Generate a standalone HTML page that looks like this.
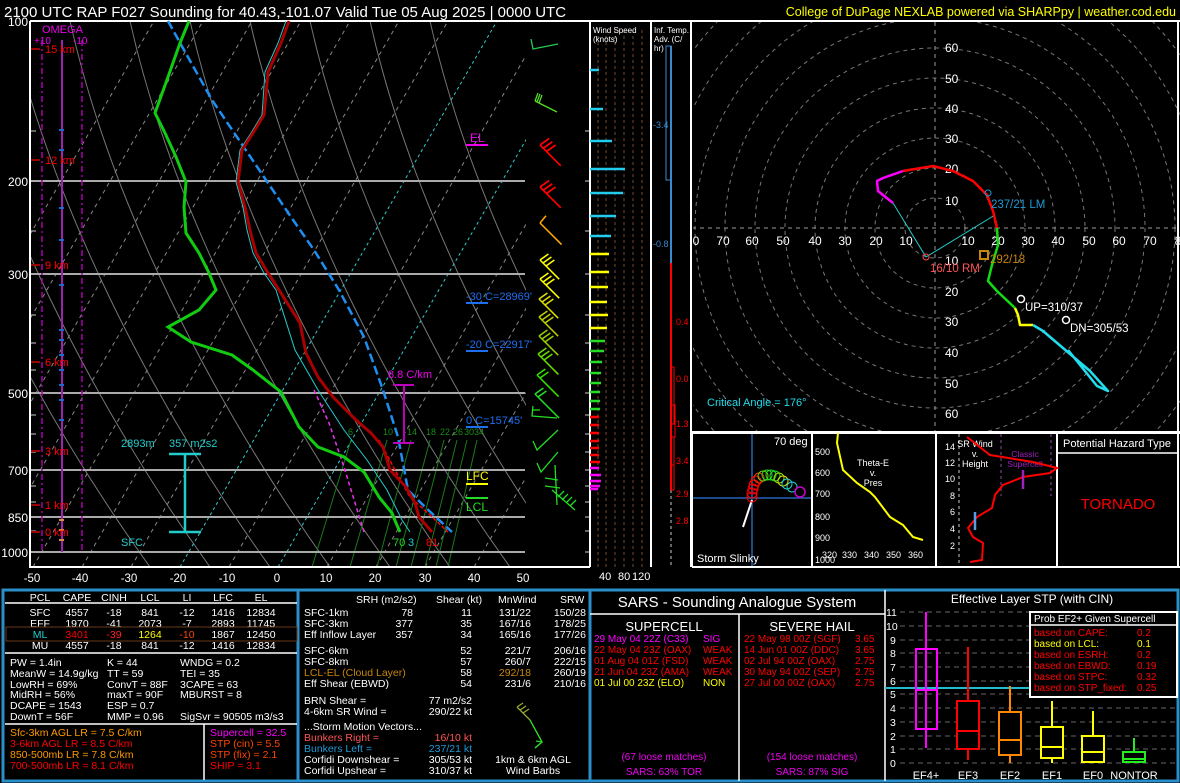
<!DOCTYPE html>
<html><head><meta charset="utf-8"><style>
html,body{margin:0;padding:0;background:#000;}
svg{display:block;font-family:"Liberation Sans",sans-serif;}
</style></head><body>
<svg width="1180" height="783" viewBox="0 0 1180 783" xmlns="http://www.w3.org/2000/svg">
<rect width="1180" height="783" fill="#000"/>
<text x="4" y="17" fill="#fff" font-size="15">2100 UTC RAP F027 Sounding for 40.43,-101.07 Valid  Tue 05 Aug 2025 | 0000 UTC</text>
<text x="1176" y="16" fill="#ff0" font-size="12.5" text-anchor="end">College of DuPage NEXLAB powered via SHARPpy | weather.cod.edu</text>

<defs><clipPath id="sk"><rect x="30" y="21" width="496" height="546"/></clipPath></defs>
<g clip-path="url(#sk)" fill="none">
 <g stroke="#777" stroke-width="1">
  <path d="M150 567 C30 400 -70 200 -110 21M210 567 C90 400 -10 200 -50 21M270 567 C150 400 50 200 10 21M330 567 C210 400 110 200 70 21M390 567 C270 400 170 200 130 21M450 567 C330 400 230 200 190 21M510 567 C390 400 290 200 250 21M570 567 C450 400 350 200 310 21M630 567 C510 400 410 200 370 21M690 567 C570 400 470 200 430 21"/>
 </g>
 <g stroke="#888" stroke-width="1" stroke-dasharray="4,4">
  <path d="M-163 567L154 21M-114 567L203 21M-65 567L252 21M-16 567L301 21M33 567L350 21M82 567L399 21M131 567L448 21M229 567L546 21M327 567L644 21M376 567L693 21M425 567L742 21M474 567L791 21"/>
 </g>
 <g stroke="#3cc" stroke-width="1" stroke-dasharray="3,3">
  <path d="M180 567L497 21M278 567L595 21"/>
 </g>
 <g stroke="#1a7a1a" stroke-width="1">
  <path d="M312 567L351 440M350 567L387 440M377 567L411 440M396 567L430 440M411 567L444 440M425 567L457 440M436 567L467 440M448 567L477 440"/>
 </g>
</g>
<g fill="#1a8a1a" font-size="9">
<text x="348" y="435">6</text><text x="383" y="435">10</text><text x="407" y="435">14</text><text x="426" y="435">18</text><text x="440" y="435">22</text><text x="453" y="435">26</text><text x="464" y="435">30</text><text x="474" y="435">34</text>
</g>
<g stroke="#aaa" stroke-width="2">
<path d="M30 181H525M30 274H525M30 393H525M30 470H525M30 517H525M30 552H525"/>
</g>
<g stroke="#888" stroke-width="1.5">
<path d="M30 131h6M30 231h6M30 315h6M30 343h6M30 370h6M30 415h6M30 434h6M30 452h6M30 486h6M30 502h6M30 531h6"/>
<path d="M585 131h6M585 181h6M585 231h6M585 274h6M585 315h6M585 343h6M585 370h6M585 393h6M585 415h6M585 434h6M585 452h6M585 470h6M585 486h6M585 502h6M585 517h6M585 531h6M585 552h6"/>
</g>
<path d="M30 21H1180M30 21V567H590M590 21V567" stroke="#fff" stroke-width="2" fill="none"/>
<g stroke="#a0a" stroke-width="1.5" fill="none">
<path d="M62 40V552" stroke="#a020b0" stroke-width="2"/>
<path d="M42 40V552M82 40V552" stroke-dasharray="6,3,2,3"/>
</g>
<g stroke="#1a6ad0" stroke-width="2"><path d="M59 130h5M59 150h5M59 208h5M59 240h5M59 285h5M59 330h5M59 340h5M59 355h5M59 370h5M59 385h5M59 400h5M59 420h5"/></g>
<g stroke="#d84" stroke-width="2"><path d="M59 520h5M59 530h5M59 540h5"/></g>
<text x="42" y="33" fill="#e0e" font-size="11">OMEGA</text>
<text x="34" y="44" fill="#e0e" font-size="10">+10</text>
<text x="73" y="44" fill="#e0e" font-size="10">-10</text>
<g stroke="#900" stroke-width="2"><path d="M31 49h9M31 160h9M31 265h9M31 362h9M31 451h9M31 505h9M31 532h9"/></g>
<g fill="#f00" font-size="11">
<text x="45" y="53">15 km</text><text x="45" y="164">12 km</text><text x="45" y="269">9 km</text><text x="45" y="366">6 km</text><text x="45" y="455">3 km</text><text x="45" y="509">1 km</text><text x="45" y="536">0 km</text>
</g>
<g fill="#fff" font-size="12" text-anchor="end">
<text x="28" y="26">100</text><text x="28" y="186">200</text><text x="28" y="279">300</text><text x="28" y="398">500</text><text x="28" y="475">700</text><text x="28" y="522">850</text><text x="28" y="557">1000</text>
</g>
<g fill="#fff" font-size="11.5" text-anchor="middle">
<text x="32" y="582">-50</text><text x="80" y="582">-40</text><text x="129" y="582">-30</text><text x="178" y="582">-20</text><text x="227" y="582">-10</text><text x="277" y="582">0</text><text x="326" y="582">10</text><text x="375" y="582">20</text><text x="425" y="582">30</text><text x="474" y="582">40</text><text x="523" y="582">50</text>
</g>
<polyline fill="none" stroke="#e3e" stroke-width="1.5" stroke-dasharray="4,3" points="314,390 329,423 344,467 364,532"/>
<polyline fill="none" stroke="#1e8ef0" stroke-width="2.5" stroke-dasharray="9,4" points="168,21 184,50 212,100 239,140 266,180 291,217 314,250 339,290 364,337 383,390 398,437 408,490 425,507 452,532"/>
<polyline fill="none" stroke="#f00" stroke-width="1.5" stroke-dasharray="4,2" points="379,440 395,470 410,497 430,515 448,532"/>
<polyline fill="none" stroke="#2cc" stroke-width="1" points="286,21 278,43 265,72 262,115 251,133 240,150 236,182 243,207 247,230 253,253 264,273 276,290 295,350 318,390 344,430 367,460 387,490 402,520 410,532"/>
<polyline fill="none" stroke="#a00" stroke-width="3" points="289,21 281,43 268,72 264,115 253,133 242,150 238,182 245,207 250,230 256,253 268,273 279,290 300,323 306,353 318,377 333,397 356,420 371,433 383,447 390,470 406,487 415,503 419,517 432,532"/>
<polyline fill="none" stroke="#1c1" stroke-width="3" points="189,21 180,43 168,77 155,113 165,133 176,157 186,182 184,207 186,233 199,253 209,273 216,290 199,310 168,327 191,342 232,355 253,370 281,392 299,427 318,447 344,457 364,472 379,497 392,513 396,523 400,532"/>
<text x="470" y="142" fill="#e0e" font-size="12">EL</text><path d="M466 145h22" stroke="#e0e" stroke-width="2"/>
<text x="466" y="480" fill="#ff0" font-size="12">LFC</text><path d="M466 484h22" stroke="#ff0" stroke-width="2"/>
<path d="M466 498h22" stroke="#2d2" stroke-width="2"/><text x="466" y="511" fill="#2d2" font-size="12">LCL</text>
<g fill="#1e6ef0" font-size="11">
<text x="466" y="300">-30 C=28969'</text><path d="M466 303h22" stroke="#1e6ef0" stroke-width="2"/>
<text x="466" y="348">-20 C=22917'</text><path d="M466 351h22" stroke="#1e6ef0" stroke-width="2"/>
<text x="466" y="424">0 C=15745'</text><path d="M466 427h22" stroke="#1e6ef0" stroke-width="2"/>
</g>
<text x="388" y="378" fill="#e0e" font-size="11">8.8 C/km</text>
<path d="M393 385h21M404 385V443M393 443h21" stroke="#b0b" stroke-width="2" fill="none"/>
<path d="M169 454h32M185 454V532M169 532h32" stroke="#2cc" stroke-width="2.5" fill="none"/>
<g fill="#2cc" font-size="11"><text x="121" y="447">2893m</text><text x="169" y="447">357 m2s2</text><text x="121" y="546">SFC</text></g>
<text x="393" y="546" fill="#2d2" font-size="11">70</text><text x="408" y="546" fill="#2cc" font-size="11">3</text><text x="426" y="546" fill="#f00" font-size="11">81</text>
<g fill="none" stroke-width="1.3">
<path d="M531 39 L533 49 L558 44" stroke="#2c5"/>
<path d="M535 101 L557 112 M535 101 l3 -8 M537 102 l3 -8 M539 103 l3 -8" stroke="#5d2"/>
<g stroke="#f00"><path transform="translate(540,145) scale(1.3)" d="M0 0 L16 16 M0 0 l7 -5 M2.5 2.5 l7 -5 M5 5 l7 -5"/><path transform="translate(540,187) scale(1.3)" d="M0 0 L16 16 M0 0 l7 -5 M2.5 2.5 l7 -5 M5 5 l7 -5"/></g>
<path transform="translate(540,223) scale(1.2)" d="M0 0 L18 18 M0 0 l5 -6" stroke="#fa0"/>
<path transform="translate(540,260) scale(1.2)" d="M0 0 L16 16 M0 0 l7 -5 M2.5 2.5 l7 -5 M5 5 l7 -5" stroke="#ff0"/>
<path transform="translate(540,279) scale(1.2)" d="M0 0 L16 16 M0 0 l7 -5 M2.5 2.5 l7 -5 M5 5 l7 -5" stroke="#ff0"/>
<path transform="translate(539,299) scale(1.2)" d="M0 0 L16 16 M0 0 l7 -5 M2.5 2.5 l7 -5 M5 5 l7 -5" stroke="#dd0"/>
<path transform="translate(539,317) scale(1.2)" d="M0 0 L16 16 M0 0 l7 -5 M2.5 2.5 l7 -5 M5 5 l7 -5" stroke="#bc0"/>
<path transform="translate(539,336) scale(1.2)" d="M0 0 L16 16 M0 0 l7 -5 M2.5 2.5 l7 -5 M5 5 l7 -5" stroke="#9c0"/>
<path transform="translate(538,354) scale(1.2)" d="M0 0 L17 17 M0 0 l7 -5 M2.5 2.5 l7 -5 M5 5 l7 -5" stroke="#6d0"/>
<path transform="translate(537,375) scale(1.2)" d="M0 0 L18 18 M0 0 l7 -5 M2.5 2.5 l7 -5" stroke="#3d0"/>
<path transform="translate(535,394) scale(1.2)" d="M0 0 L20 20 M0 0 l7 -5 M2.5 2.5 l7 -5" stroke="#2d2"/>
<path d="M533 406 L532 416 L557 418 M532 410 l8 0" stroke="#2d2"/>
<path d="M558 430 L537 450 L533 441" stroke="#2d2"/>
<path d="M558 452 L541 472 L537 463" stroke="#2d2"/>
<path d="M555 465 L557 505 M545 478 L558 480 M545 486 L560 488 M552 490 L575 510 M558 497 l6 -6 M562 500 l6 -6 M566 503 l6 -6 M570 506 l6 -6" stroke="#2d2"/>
</g>

<g stroke="#7a4a2a" stroke-width="1" stroke-dasharray="3,3"><path d="M598 30V567M606 30V567M615 30V567M624 30V567M633 30V567M642 30V567"/></g>
<path d="M651 21V567" stroke="#fff" stroke-width="2"/>
<path d="M590 21V567" stroke="#fff" stroke-width="1" stroke-dasharray="2,2"/>
<text x="593" y="33" fill="#fff" font-size="8">Wind Speed</text><text x="593" y="42" fill="#fff" font-size="8">(knots)</text>
<g stroke-width="2.5">
<g stroke="#2ce"><path d="M590 70H599M590 109H603M590 141H612M590 169H625M590 193H623M590 216H616M590 236H611"/></g>
<g stroke="#ff0"><path d="M590 254H609M590 272H609M590 287H608M590 302H607M590 315H608M590 328H607"/></g>
<g stroke="#2d2"><path d="M590 341H605M590 351H604M590 362H602M590 373H601M590 383H601M590 392H600M590 401H600M590 409H600"/></g>
<g stroke="#f00"><path d="M590 417H599M590 425H599M590 433H599M590 441H599M590 448H599M590 455H599M590 462H600"/></g>
<g stroke="#f0f"><path d="M590 468H599M590 475H601M590 481H601M590 486H600M590 489H598"/></g>
</g>
<g fill="#fff" font-size="11"><text x="599" y="580">40</text><text x="618" y="580">80</text><text x="632" y="580">120</text></g>
<text x="654" y="33" fill="#fff" font-size="8">Inf. Temp.</text><text x="654" y="42" fill="#fff" font-size="8">Adv. (C/</text><text x="654" y="51" fill="#fff" font-size="8">hr)</text>
<path d="M671 46V567" stroke="#888" stroke-width="1.5" stroke-dasharray="3,3"/>
<path d="M666 46h5V180h-5z" fill="none" stroke="#3a8ad0" stroke-width="1"/>
<path d="M671 46V263" stroke="#3a8ad0" stroke-width="2"/>
<path d="M671 263V490" stroke="#f00" stroke-width="2"/>
<path d="M671 367h3V424h-3M671 405h4V437h-4M671 437h3V465h-3M671 465h3V490h-3" fill="none" stroke="#f00" stroke-width="1"/>
<g font-size="9"><text x="653" y="128" fill="#3a8ad0">-3.4</text><text x="653" y="247" fill="#3a8ad0">-0.8</text>
<text x="676" y="325" fill="#f00">0.4</text><text x="676" y="382" fill="#f00">0.0</text><text x="676" y="427" fill="#f00">1.3</text><text x="676" y="464" fill="#f00">3.4</text><text x="676" y="497" fill="#f00">2.9</text><text x="676" y="524" fill="#f00">2.8</text></g>
<path d="M691 21V567" stroke="#fff" stroke-width="2"/>

<defs><clipPath id="hd"><rect x="693" y="22" width="487" height="409"/></clipPath></defs>
<g clip-path="url(#hd)" fill="none" stroke="#777" stroke-width="1" stroke-dasharray="4,4">
<circle cx="935" cy="228" r="30"/><circle cx="935" cy="228" r="60"/><circle cx="935" cy="228" r="90"/><circle cx="935" cy="228" r="120"/><circle cx="935" cy="228" r="150"/><circle cx="935" cy="228" r="180"/><circle cx="935" cy="228" r="210"/><circle cx="935" cy="228" r="240"/><circle cx="935" cy="228" r="270"/><circle cx="935" cy="228" r="300"/>
<path d="M935 22V432M692 228H1180" stroke="#999"/>
</g>
<g fill="#fff" font-size="12">
<text x="945" y="52">60</text><text x="945" y="83">50</text><text x="945" y="113">40</text><text x="945" y="143">30</text><text x="945" y="173">20</text><text x="945" y="205">10</text>
<text x="945" y="265">10</text><text x="945" y="296">20</text><text x="945" y="326">30</text><text x="945" y="357">40</text><text x="945" y="388">50</text><text x="945" y="418">60</text>
<g text-anchor="middle"><text x="696" y="245">0</text><text x="723" y="245">70</text><text x="752" y="245">60</text><text x="783" y="245">50</text><text x="815" y="245">40</text><text x="845" y="245">30</text><text x="876" y="245">20</text><text x="906" y="245">10</text><text x="968" y="245">10</text><text x="998" y="245">20</text><text x="1028" y="245">30</text><text x="1058" y="245">40</text><text x="1089" y="245">50</text><text x="1119" y="245">60</text><text x="1150" y="245">70</text><text x="1178" y="245">8</text></g>
</g>
<path d="M926 257L893 203M926 257L995 215" stroke="#2cc" stroke-width="1" fill="none"/>
<g fill="none" stroke-width="2.5" stroke-linejoin="round">
<polyline stroke="#f0f" points="893,203 878,191 877,181 883,178 903,171"/>
<polyline stroke="#f00" points="903,171 933,166 953,171 973,181 987,195 993,211 997,228"/>
<polyline stroke="#1d1" points="997,228 998,245 992,265 988,281 997,291 1015,308"/>
<polyline stroke="#ff0" points="1015,308 1018,315 1020,325 1033,325"/>
<polyline stroke="#2de" points="1033,325 1043,331 1090,371 1108,391 1097,386 1068,350"/>
</g>
<circle cx="926" cy="257" r="3" fill="none" stroke="#f44"/>
<text x="930" y="272" fill="#f55" font-size="11.5">16/10 RM</text>
<circle cx="988" cy="193" r="3" fill="none" stroke="#1e9ad6"/>
<text x="991" y="208" fill="#1e9ad6" font-size="11.5">237/21 LM</text>
<rect x="980" y="251" width="8" height="8" fill="none" stroke="#c8860a" stroke-width="2"/>
<text x="990" y="263" fill="#c8860a" font-size="11.5">292/18</text>
<circle cx="1021" cy="299" r="3.5" fill="none" stroke="#fff" stroke-width="1.5"/>
<text x="1025" y="311" fill="#fff" font-size="11.5">UP=310/37</text>
<circle cx="1066" cy="320" r="3.5" fill="none" stroke="#fff" stroke-width="1.5"/>
<text x="1070" y="332" fill="#fff" font-size="11.5">DN=305/53</text>
<text x="707" y="406" fill="#2de" font-size="11">Critical Angle = 176°</text>
<path d="M692 432H1180M1178 21V432" stroke="#fff" stroke-width="2" fill="none"/>

<path d="M692 433H1180M692 567H1180M692 433V567M812 433V567M936 433V567M1057 433V567M1178 433V567" stroke="#fff" stroke-width="2" fill="none"/>
<path d="M752 434V566M693 498H811" stroke="#1a4a8a" stroke-width="2"/>
<path d="M743 527L752 500" stroke="#fff" stroke-width="2"/>
<g fill="none" stroke-width="1">
<circle cx="752" cy="497" r="5" stroke="#f00"/><circle cx="752" cy="493" r="5" stroke="#f00"/><circle cx="753" cy="489" r="5" stroke="#f00"/><circle cx="754" cy="485" r="5" stroke="#f00"/><circle cx="756" cy="481" r="5" stroke="#f00"/><circle cx="759" cy="478" r="5" stroke="#e30"/>
<circle cx="763" cy="476" r="5" stroke="#7c0"/><circle cx="767" cy="475" r="5" stroke="#2d2"/><circle cx="771" cy="475" r="5" stroke="#2d2"/><circle cx="775" cy="476" r="5" stroke="#2d2"/><circle cx="779" cy="478" r="5" stroke="#9d0"/><circle cx="783" cy="481" r="5" stroke="#dd0"/><circle cx="787" cy="484" r="5" stroke="#2cc"/><circle cx="792" cy="487" r="5" stroke="#2cc"/><circle cx="800" cy="492" r="5" stroke="#c0c" stroke-width="1.5"/>
</g>
<text x="774" y="445" fill="#fff" font-size="11">70 deg</text>
<text x="697" y="562" fill="#fff" font-size="11">Storm Slinky</text>
<g fill="#fff" font-size="9"><text x="815" y="455">500</text><text x="815" y="476">600</text><text x="815" y="497">700</text><text x="815" y="520">800</text><text x="815" y="541">900</text><text x="815" y="563">1000</text>
<text x="822" y="558">320</text><text x="842" y="558">330</text><text x="864" y="558">340</text><text x="886" y="558">350</text><text x="908" y="558">360</text>
<text x="873" y="466" text-anchor="middle">Theta-E</text><text x="873" y="476" text-anchor="middle">v.</text><text x="873" y="486" text-anchor="middle">Pres</text></g>
<polyline fill="none" stroke="#ff0" stroke-width="2" points="838,433 837,443 843,470 857,483 870,492 875,497 890,517 903,525 913,537 923,540"/>
<path d="M959 434V566" stroke="#888" stroke-width="1.5" stroke-dasharray="3,3"/>
<path d="M1001 434V496M1051 434V496" stroke="#603070" stroke-width="1.5" stroke-dasharray="3,3"/>
<g fill="#fff" font-size="9" text-anchor="end"><text x="955" y="450">14</text><text x="955" y="466">12</text><text x="955" y="482">10</text><text x="955" y="499">8</text><text x="955" y="515">6</text><text x="955" y="532">4</text><text x="955" y="549">2</text></g>
<g fill="#fff" font-size="9" text-anchor="middle"><text x="975" y="447">SR Wind</text><text x="975" y="457">v.</text><text x="975" y="467">Height</text></g>
<g fill="#a020c0" font-size="8.5" text-anchor="middle"><text x="1025" y="457">Classic</text><text x="1025" y="467">Supercell</text></g>
<polyline fill="none" stroke="#f00" stroke-width="2" points="967,437 990,455 1033,462 1057,468 1050,473 1023,477 1003,485 995,495 992,508 977,517 968,528 973,537 983,543 982,560 970,562"/>
<path d="M1023 470V489" stroke="#a020c0" stroke-width="2.5"/>
<path d="M975 512V530" stroke="#5a9ae0" stroke-width="2.5"/>
<text x="1117" y="447" fill="#fff" font-size="11" text-anchor="middle">Potential Hazard Type</text>
<path d="M1057 453H1178" stroke="#fff" stroke-width="1.5"/>
<text x="1118" y="509" fill="#f00" font-size="15" text-anchor="middle">TORNADO</text>

<path d="M3 590H1178V781H3Z" fill="none" stroke="#2a8fc8" stroke-width="3"/>
<path d="M298 590V781M590 590V781" stroke="#2a8fc8" stroke-width="3"/>
<g fill="#fff" font-size="10.5" text-anchor="middle">
<text x="40" y="601">PCL</text><text x="77" y="601">CAPE</text><text x="114" y="601">CINH</text><text x="150" y="601">LCL</text><text x="187" y="601">LI</text><text x="223" y="601">LFC</text><text x="261" y="601">EL</text>
<text x="40" y="616">SFC</text><text x="77" y="616">4557</text><text x="114" y="616">-18</text><text x="150" y="616">841</text><text x="187" y="616">-12</text><text x="223" y="616">1416</text><text x="261" y="616">12834</text>
<text x="40" y="627">EFF</text><text x="77" y="627">1970</text><text x="114" y="627">-41</text><text x="150" y="627">2073</text><text x="187" y="627">-7</text><text x="223" y="627">2893</text><text x="261" y="627">11745</text>
<text x="40" y="638" fill="#2cc">ML</text><text x="77" y="638" fill="#f00">3401</text><text x="114" y="638" fill="#f22">-39</text><text x="150" y="638" fill="#ff0">1264</text><text x="187" y="638" fill="#f40">-10</text><text x="223" y="638">1867</text><text x="261" y="638">12450</text>
<text x="40" y="649">MU</text><text x="77" y="649">4557</text><text x="114" y="649">-18</text><text x="150" y="649">841</text><text x="187" y="649">-12</text><text x="223" y="649">1416</text><text x="261" y="649">12834</text>
</g>
<path d="M5 603H297M5 653H297M5 724H297M204 724V780" stroke="#fff" stroke-width="1.5" fill="none"/>
<rect x="6" y="627" width="291" height="14" fill="none" stroke="#6a3a1a" stroke-width="1"/>
<g fill="#fff" font-size="10.5">
<text x="10" y="666">PW = 1.4in</text><text x="107" y="666">K = 44</text><text x="180" y="666">WNDG = 0.2</text>
<text x="10" y="677">MeanW = 14.9g/kg</text><text x="107" y="677">TT = 59</text><text x="180" y="677">TEI = 35</text>
<text x="10" y="688">LowRH = 69%</text><text x="107" y="688">ConvT = 88F</text><text x="180" y="688">3CAPE = 63</text>
<text x="10" y="698">MidRH = 56%</text><text x="107" y="698">maxT = 90F</text><text x="180" y="698">MBURST = 8</text>
<text x="10" y="709">DCAPE = 1543</text><text x="107" y="709">ESP = 0.7</text>
<text x="10" y="720">DownT = 56F</text><text x="107" y="720">MMP = 0.96</text><text x="180" y="720">SigSvr = 90505 m3/s3</text>
</g>
<g font-size="10.5">
<text x="10" y="736" fill="#f90">Sfc-3km AGL LR = 7.5 C/km</text>
<text x="10" y="747" fill="#f00">3-6km AGL LR = 8.5 C/km</text>
<text x="10" y="758" fill="#f90">850-500mb LR = 7.8 C/km</text>
<text x="10" y="769" fill="#f00">700-500mb LR = 8.1 C/km</text>
<text x="210" y="736" fill="#f0f">Supercell = 32.5</text>
<text x="210" y="747" fill="#f40">STP (cin) = 5.5</text>
<text x="210" y="758" fill="#f40">STP (fix) = 2.1</text>
<text x="210" y="769" fill="#f00">SHIP = 3.1</text>
</g>
<g fill="#fff" font-size="10.5">
<text x="356" y="603">SRH (m2/s2)</text><text x="436" y="603">Shear (kt)</text><text x="498" y="603">MnWind</text><text x="560" y="603">SRW</text>
<text x="304" y="616">SFC-1km</text><text x="304" y="627">SFC-3km</text><text x="304" y="638">Eff Inflow Layer</text>
<text x="304" y="654">SFC-6km</text><text x="304" y="665">SFC-8km</text><text x="304" y="676" fill="#c8860a">LCL-EL (Cloud Layer)</text><text x="304" y="687">Eff Shear (EBWD)</text>
<text x="304" y="704">BRN Shear =</text><text x="304" y="715">4-6km SR Wind =</text>
<text x="304" y="730">...Storm Motion Vectors...</text>
<text x="304" y="741" fill="#f55">Bunkers Right =</text><text x="304" y="752" fill="#1e9ad6">Bunkers Left =</text>
<text x="304" y="763">Corfidi Downshear =</text><text x="304" y="774">Corfidi Upshear =</text>
<g text-anchor="end">
<text x="413" y="616">78</text><text x="413" y="627">377</text><text x="413" y="638">357</text>
<text x="472" y="616">11</text><text x="472" y="627">35</text><text x="472" y="638">34</text><text x="472" y="654">52</text><text x="472" y="665">57</text><text x="472" y="676">58</text><text x="472" y="687">54</text>
<text x="531" y="616">131/22</text><text x="531" y="627">167/16</text><text x="531" y="638">165/16</text><text x="531" y="654">221/7</text><text x="531" y="665">260/7</text><text x="531" y="676" fill="#c8860a">292/18</text><text x="531" y="687">231/6</text>
<text x="586" y="616">150/28</text><text x="586" y="627">178/25</text><text x="586" y="638">177/26</text><text x="586" y="654">206/16</text><text x="586" y="665">222/15</text><text x="586" y="676">260/19</text><text x="586" y="687">210/16</text>
<text x="472" y="704">77 m2/s2</text><text x="472" y="715">290/22 kt</text>
<text x="472" y="741" fill="#f55">16/10 kt</text><text x="472" y="752" fill="#1e9ad6">237/21 kt</text><text x="472" y="763">305/53 kt</text><text x="472" y="774">310/37 kt</text>
</g>
<text x="533" y="763" text-anchor="middle">1km &amp; 6km AGL</text><text x="533" y="774" text-anchor="middle">Wind Barbs</text>
</g>
<path d="M517 707L530 720L542 742L535 748M517 707l6 -4M520 710l6 -4M523 713l6 -4" stroke="#9a3" stroke-width="1.3" fill="none"/>
<path d="M530 720L542 742L535 748M542 742l-6 -1" stroke="#2d2" stroke-width="1.3" fill="none"/>
<text x="737" y="607" fill="#fff" font-size="15" text-anchor="middle">SARS - Sounding Analogue System</text>
<path d="M590 614H885M739 614V781M885 590V781" stroke="#fff" stroke-width="1.5"/>
<text x="664" y="631" fill="#fff" font-size="13" text-anchor="middle">SUPERCELL</text>
<text x="812" y="631" fill="#fff" font-size="13" text-anchor="middle">SEVERE HAIL</text>
<g font-size="10">
<text x="594" y="642" fill="#f0f">29 May 04 22Z (C33)</text><text x="703" y="642" fill="#f0f">SIG</text>
<text x="594" y="653" fill="#f00">22 May 04 23Z (OAX)</text><text x="703" y="653" fill="#f00">WEAK</text>
<text x="594" y="664" fill="#f00">01 Aug 04 01Z (FSD)</text><text x="703" y="664" fill="#f00">WEAK</text>
<text x="594" y="675" fill="#f00">21 Jun 04 23Z (AMA)</text><text x="703" y="675" fill="#f00">WEAK</text>
<text x="594" y="686" fill="#ff0">01 Jul 00 23Z (ELO)</text><text x="703" y="686" fill="#ff0">NON</text>
<g fill="#f00"><text x="744" y="642">22 May 98 00Z (SGF)</text><text x="855" y="642">3.65</text>
<text x="744" y="653">14 Jun 01 00Z (DDC)</text><text x="855" y="653">3.65</text>
<text x="744" y="664">02 Jul 94 00Z (OAX)</text><text x="855" y="664">2.75</text>
<text x="744" y="675">30 May 94 00Z (SEP)</text><text x="855" y="675">2.75</text>
<text x="744" y="686">27 Jul 00 00Z (OAX)</text><text x="855" y="686">2.75</text></g>
<g fill="#e0e" text-anchor="middle"><text x="664" y="760">(67 loose matches)</text><text x="664" y="775">SARS: 63% TOR</text>
<text x="812" y="760">(154 loose matches)</text><text x="812" y="775">SARS: 87% SIG</text></g>
</g>
<text x="1032" y="603" fill="#fff" font-size="12" text-anchor="middle">Effective Layer STP (with CIN)</text>
<g stroke="#444" stroke-width="1.5" stroke-dasharray="5,4"><path d="M900 763H1176M900 749H1176M900 736H1176M900 722H1176M900 708H1176M900 694H1176M900 681H1176M900 667H1176M900 653H1176M900 640H1176M900 626H1176M900 612H1176"/></g>
<g fill="#fff" font-size="10.5"><text x="890" y="767">0</text><text x="890" y="753">1</text><text x="890" y="740">2</text><text x="890" y="726">3</text><text x="890" y="712">4</text><text x="890" y="698">5</text><text x="890" y="685">6</text><text x="890" y="671">7</text><text x="890" y="657">8</text><text x="890" y="644">9</text><text x="886" y="630">10</text><text x="886" y="616">11</text></g>
<path d="M885 688H1178" stroke="#2bc" stroke-width="2"/>
<g fill="none" stroke-width="2">
<g stroke="#f0f"><path d="M926 748V612"/><rect x="916" y="649" width="21" height="80"/><path d="M916 690H937"/></g>
<g stroke="#f00"><path d="M968 760V647"/><rect x="957" y="701" width="22" height="48" fill="#000"/><path d="M957 731H979"/></g>
<g stroke="#f80"><path d="M1010 763V686"/><rect x="999" y="712" width="22" height="43" fill="#000"/><path d="M999 740H1021"/></g>
<g stroke="#ff0"><path d="M1052 763V701"/><rect x="1041" y="727" width="22" height="31" fill="#000"/><path d="M1041 747H1063"/><path d="M1093 763V711"/><rect x="1082" y="736" width="22" height="26" fill="#000"/><path d="M1082 752H1104"/></g>
<g stroke="#2e2"><path d="M1134 763V738"/><rect x="1123" y="752" width="22" height="10" fill="#000"/><path d="M1123 759H1145"/></g>
</g>
<g fill="#fff" font-size="11" text-anchor="middle"><text x="926" y="779">EF4+</text><text x="968" y="779">EF3</text><text x="1010" y="779">EF2</text><text x="1052" y="779">EF1</text><text x="1093" y="779">EF0</text><text x="1134" y="779">NONTOR</text></g>
<rect x="1030" y="612" width="147" height="85" fill="#000" stroke="#fff" stroke-width="2"/>
<path d="M1030 625H1177" stroke="#fff" stroke-width="1.5"/>
<text x="1034" y="622" fill="#fff" font-size="10">Prob EF2+ Given Supercell</text>
<g font-size="10">
<text x="1034" y="636" fill="#f00">based on CAPE:</text><text x="1137" y="636" fill="#f00">0.2</text>
<text x="1034" y="647" fill="#ff0">based on LCL:</text><text x="1137" y="647" fill="#ff0">0.1</text>
<text x="1034" y="658" fill="#f00">based on ESRH:</text><text x="1137" y="658" fill="#f00">0.2</text>
<text x="1034" y="669" fill="#f00">based on EBWD:</text><text x="1137" y="669" fill="#f00">0.19</text>
<text x="1034" y="680" fill="#f00">based on STPC:</text><text x="1137" y="680" fill="#f00">0.32</text>
<text x="1034" y="691" fill="#f00">based on STP_fixed:</text><text x="1137" y="691" fill="#f00">0.25</text>
</g>
</svg>
</body></html>
